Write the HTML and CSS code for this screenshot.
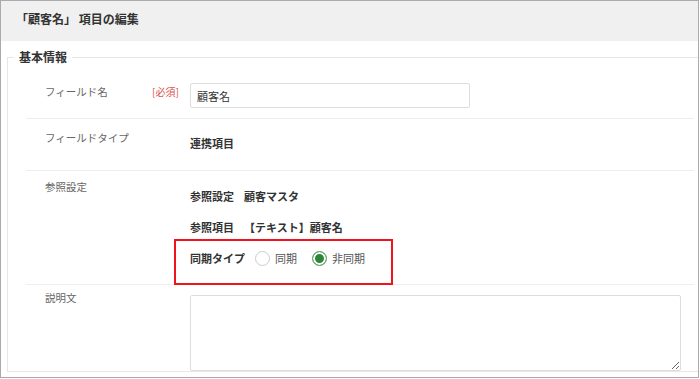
FILE: index.html
```html
<!DOCTYPE html>
<html lang="ja">
<head>
  <meta charset="UTF-8">
  <meta name="viewport" content="width=device-width, initial-scale=1.0">
  <title>「顧客名」 項目の編集</title>
  <link rel="stylesheet" href="styles.css">
</head>
<body>

  <div class="frame">
    <header class="title-bar">「顧客名」 項目の編集</header>

    <fieldset class="section">
      <legend>基本情報</legend>

      <div class="row row-name">
        <div class="label">フィールド名</div>
        <div class="req">[必須]</div>
        <div class="value">
          <input type="text" class="text-input" value="顧客名">
        </div>
      </div>

      <div class="row row-type">
        <div class="label">フィールドタイプ</div>
        <div class="req"></div>
        <div class="value"><b>連携項目</b></div>
      </div>

      <div class="row row-ref">
        <div class="label">参照設定</div>
        <div class="req"></div>
        <div class="value">
          <div class="ref-line"><b>参照設定</b><b>顧客マスタ</b></div>
          <div class="ref-line"><b>参照項目</b><b>【テキスト】顧客名</b></div>
          <div class="sync">
            <b>同期タイプ</b>
            <label class="radio"><span class="dot"></span>同期</label>
            <label class="radio"><span class="dot checked"></span>非同期</label>
          </div>
        </div>
      </div>

      <div class="row row-desc">
        <div class="label">説明文</div>
        <div class="req"></div>
        <div class="value">
          <textarea class="memo"></textarea>
        </div>
      </div>
    </fieldset>
  </div>

</body>
</html>
```

FILE: styles.css
```css
body {
  margin: 0;
  padding: 0;
  background-color: #fff;
  font-family: "Noto Sans CJK JP", "Noto Sans", sans-serif;
  color: #333;
}
.frame {
  width: 699px;
  height: 378px;
  box-sizing: border-box;
  border: 1px solid #aaa;
  overflow: hidden;
}
.title-bar {
  background-color: #f0f0f0;
  height: 40px;
  box-sizing: border-box;
  padding: 10px 0 0 15px;
  font-size: 12px;
  line-height: 16px;
  font-weight: bold;
  color: #333;
}
.section {
  margin: 8px 0 0 6px;
  padding: 0;
  border: 1px solid #e6e6e6;
  border-right: none;
  min-width: 0;
}
.section legend {
  margin-left: 6px;
  padding: 0 5px;
  font-size: 12px;
  line-height: 16px;
  font-weight: bold;
  color: #333;
}
.row {
  display: grid;
  grid-template-columns: 107px 38px 1fr;
  margin: 0 4px 0 18px;
  padding-left: 19px;
  border-bottom: 1px solid #eee;
  font-size: 11px;
  line-height: 16px;
}
.label {
  color: #666;
  font-size: 10.5px;
}
.req {
  color: #d9534f;
  font-size: 10px;
}
.value b {
  font-weight: bold;
  color: #333;
}
.row-name {
  padding: 18px 0 10px 19px;
}
.row-name .label,
.row-name .req {
  padding-top: 1px;
}
.text-input {
  width: 280px;
  height: 25px;
  box-sizing: border-box;
  border: 1px solid #ddd;
  border-radius: 2px;
  padding: 0 6px;
  font-family: inherit;
  font-size: 11px;
  color: #333;
  outline: none;
}
.row-type {
  padding: 11px 0 19px 19px;
}
.row-type .value {
  padding-top: 5px;
}
.row-ref {
  padding: 8px 0 0 19px;
}
.row-ref .value {
  padding-top: 9px;
}
.ref-line {
  display: flex;
  gap: 10px;
  margin-bottom: 15px;
}
.sync {
  display: flex;
  align-items: center;
  width: 219px;
  height: 46px;
  box-sizing: border-box;
  margin: -11px 0 -1px -16px;
  padding: 0 0 8px 14px;
  border: 2px solid #f0141c;
}
.radio {
  display: flex;
  align-items: center;
  gap: 5px;
  color: #555;
  margin-left: 10px;
}
.radio + .radio {
  margin-left: 15px;
}
.dot {
  width: 15px;
  height: 15px;
  box-sizing: border-box;
  border: 1px solid #ccc;
  border-radius: 50%;
  background-color: #fff;
}
.dot.checked {
  border-color: #6aa56e;
  background-color: #2e8536;
  box-shadow: inset 0 0 0 2px #fff;
}
.row-desc {
  padding: 5px 0 0 19px;
  border-bottom: none;
}
.row-desc .value {
  padding-top: 5px;
}
.memo {
  display: block;
  width: 491px;
  height: 76px;
  box-sizing: border-box;
  border: 1px solid #ddd;
  border-radius: 2px;
  margin: 0;
}
```
